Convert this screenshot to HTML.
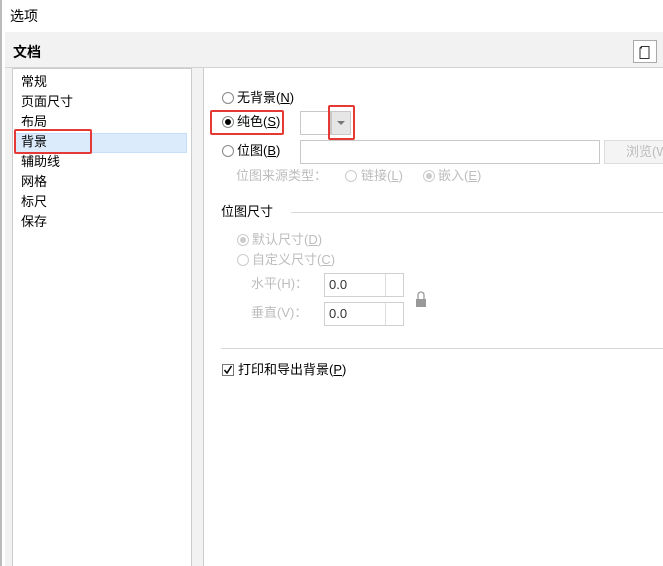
<!DOCTYPE html>
<html><head><meta charset="utf-8"><style>
*{margin:0;padding:0;box-sizing:border-box}
body{width:663px;height:566px;overflow:hidden;background:#fff;font-family:"Liberation Sans","Noto Sans CJK SC",sans-serif;font-size:13px;color:#000;position:relative}
.a{position:absolute;white-space:nowrap;line-height:16px}
.g{color:#bdbdbd}
.r{position:absolute;width:12px;height:12px;border:1px solid #888;border-radius:50%;background:#fff}
.r.d{border-color:#ccc}
.dot{position:absolute;left:2px;top:2px;width:6px;height:6px;border-radius:50%;background:#000}
.r.d .dot{background:#ccc}
.box{position:absolute;border:1px solid #c8c8c8;background:#fff}
.red{position:absolute;border:2px solid #e53935;border-radius:2px}
u{text-decoration:underline}
</style></head><body>
<div class="a" style="left:0;top:0;width:2px;height:566px;background:#bbb"></div>
<div class="a" style="left:10px;top:8px;font-size:14px">选项</div>
<div class="a" style="left:5px;top:32px;width:658px;height:534px;background:#f2f2f2"></div>
<div class="a" style="left:5px;top:67px;width:658px;height:1px;background:#d4d4d4"></div>
<div class="a" style="left:13px;top:44px;font-weight:bold;font-size:14px">文档</div>
<div class="a" style="left:633px;top:40px;width:24px;height:23px;border:1px solid #aaa;background:#fff"></div>
<svg class="a" style="left:637px;top:43px" width="16" height="18"><path d="M4.5 3.5h7.5v12h-9v-10.5z" fill="none" stroke="#333" stroke-width="1"/><path d="M3 5.5l2-2.5v2.5z" fill="#333"/></svg>
<div class="a" style="left:12px;top:68px;width:180px;height:498px;background:#fff;border:1px solid #ccc;border-bottom:none"></div>
<div class="a" style="left:14px;top:133px;width:173px;height:20px;background:#dcebfb;border:1px solid #c5defa"></div>
<div class="a" style="left:21px;top:74px">常规</div>
<div class="a" style="left:21px;top:94px">页面尺寸</div>
<div class="a" style="left:21px;top:114px">布局</div>
<div class="a" style="left:21px;top:134px">背景</div>
<div class="a" style="left:21px;top:154px">辅助线</div>
<div class="a" style="left:21px;top:174px">网格</div>
<div class="a" style="left:21px;top:194px">标尺</div>
<div class="a" style="left:21px;top:214px">保存</div>
<div class="red" style="left:14px;top:129px;width:78px;height:25px"></div>
<div class="a" style="left:203px;top:68px;width:460px;height:498px;background:#fff;border-left:1px solid #ccc"></div>

<div class="r" style="left:222px;top:92px"></div><div class="a" style="left:237px;top:90px">无背景(<u>N</u>)</div>
<div class="r" style="left:222px;top:116px"><div class="dot"></div></div><div class="a" style="left:237px;top:114px">纯色(<u>S</u>)</div>
<div class="red" style="left:210px;top:110px;width:74px;height:25px"></div>
<div class="box" style="left:300px;top:111px;width:31px;height:24px"></div>
<div class="a" style="left:331px;top:111px;width:20px;height:24px;background:#e6e6e6;border:1px solid #c8c8c8"></div>
<svg class="a" style="left:336px;top:120px" width="10" height="6"><path d="M1 1h8l-4 4z" fill="#777"/></svg>
<div class="red" style="left:328px;top:105px;width:27px;height:35px"></div>
<div class="r" style="left:222px;top:145px"></div><div class="a" style="left:237px;top:143px">位图(<u>B</u>)</div>
<div class="box" style="left:300px;top:140px;width:300px;height:24px"></div>
<div class="a g" style="left:604px;top:140px;width:70px;height:24px;background:#f4f4f4;border:1px solid #ddd;padding:3px 0 0 21px">浏览(W</div>
<div class="a g" style="left:236px;top:168px">位图来源类型：</div>
<div class="r d" style="left:345px;top:170px"></div><div class="a g" style="left:361px;top:168px">链接(<u>L</u>)</div>
<div class="r d" style="left:423px;top:170px"><div class="dot"></div></div><div class="a g" style="left:438px;top:168px">嵌入(<u>E</u>)</div>

<div class="a" style="left:221px;top:204px">位图尺寸</div>
<div class="a" style="left:291px;top:212px;width:372px;height:1px;background:#d8d8d8"></div>
<div class="r d" style="left:237px;top:234px"><div class="dot"></div></div><div class="a g" style="left:252px;top:232px">默认尺寸(<u>D</u>)</div>
<div class="r d" style="left:237px;top:254px"></div><div class="a g" style="left:252px;top:252px">自定义尺寸(<u>C</u>)</div>
<div class="a g" style="left:251px;top:276px">水平(H)：</div>
<div class="box" style="left:324px;top:273px;width:80px;height:24px;border-color:#d0d0d0"></div>
<div class="a" style="left:329px;top:277px;color:#333">0.0</div>
<div class="a" style="left:385px;top:274px;width:1px;height:22px;background:#ddd"></div>
<div class="a g" style="left:251px;top:305px">垂直(V)：</div>
<div class="box" style="left:324px;top:302px;width:80px;height:24px;border-color:#d0d0d0"></div>
<div class="a" style="left:329px;top:306px;color:#333">0.0</div>
<div class="a" style="left:385px;top:303px;width:1px;height:22px;background:#ddd"></div>
<svg class="a" style="left:414px;top:291px" width="14" height="17"><path d="M4 8v-4a3 3 0 0 1 6 0v4" fill="none" stroke="#999" stroke-width="1.3"/><rect x="2" y="8" width="10" height="8" fill="#999"/></svg>
<div class="a" style="left:221px;top:348px;width:442px;height:1px;background:#d8d8d8"></div>
<div class="a" style="left:222px;top:364px;width:12px;height:12px;border:1px solid #777;background:#fff"></div>
<svg class="a" style="left:223px;top:365px" width="10" height="10"><path d="M1.5 5l2.5 3 4.5-7" fill="none" stroke="#000" stroke-width="1.5"/></svg>
<div class="a" style="left:238px;top:362px">打印和导出背景(<u>P</u>)</div>
</body></html>
